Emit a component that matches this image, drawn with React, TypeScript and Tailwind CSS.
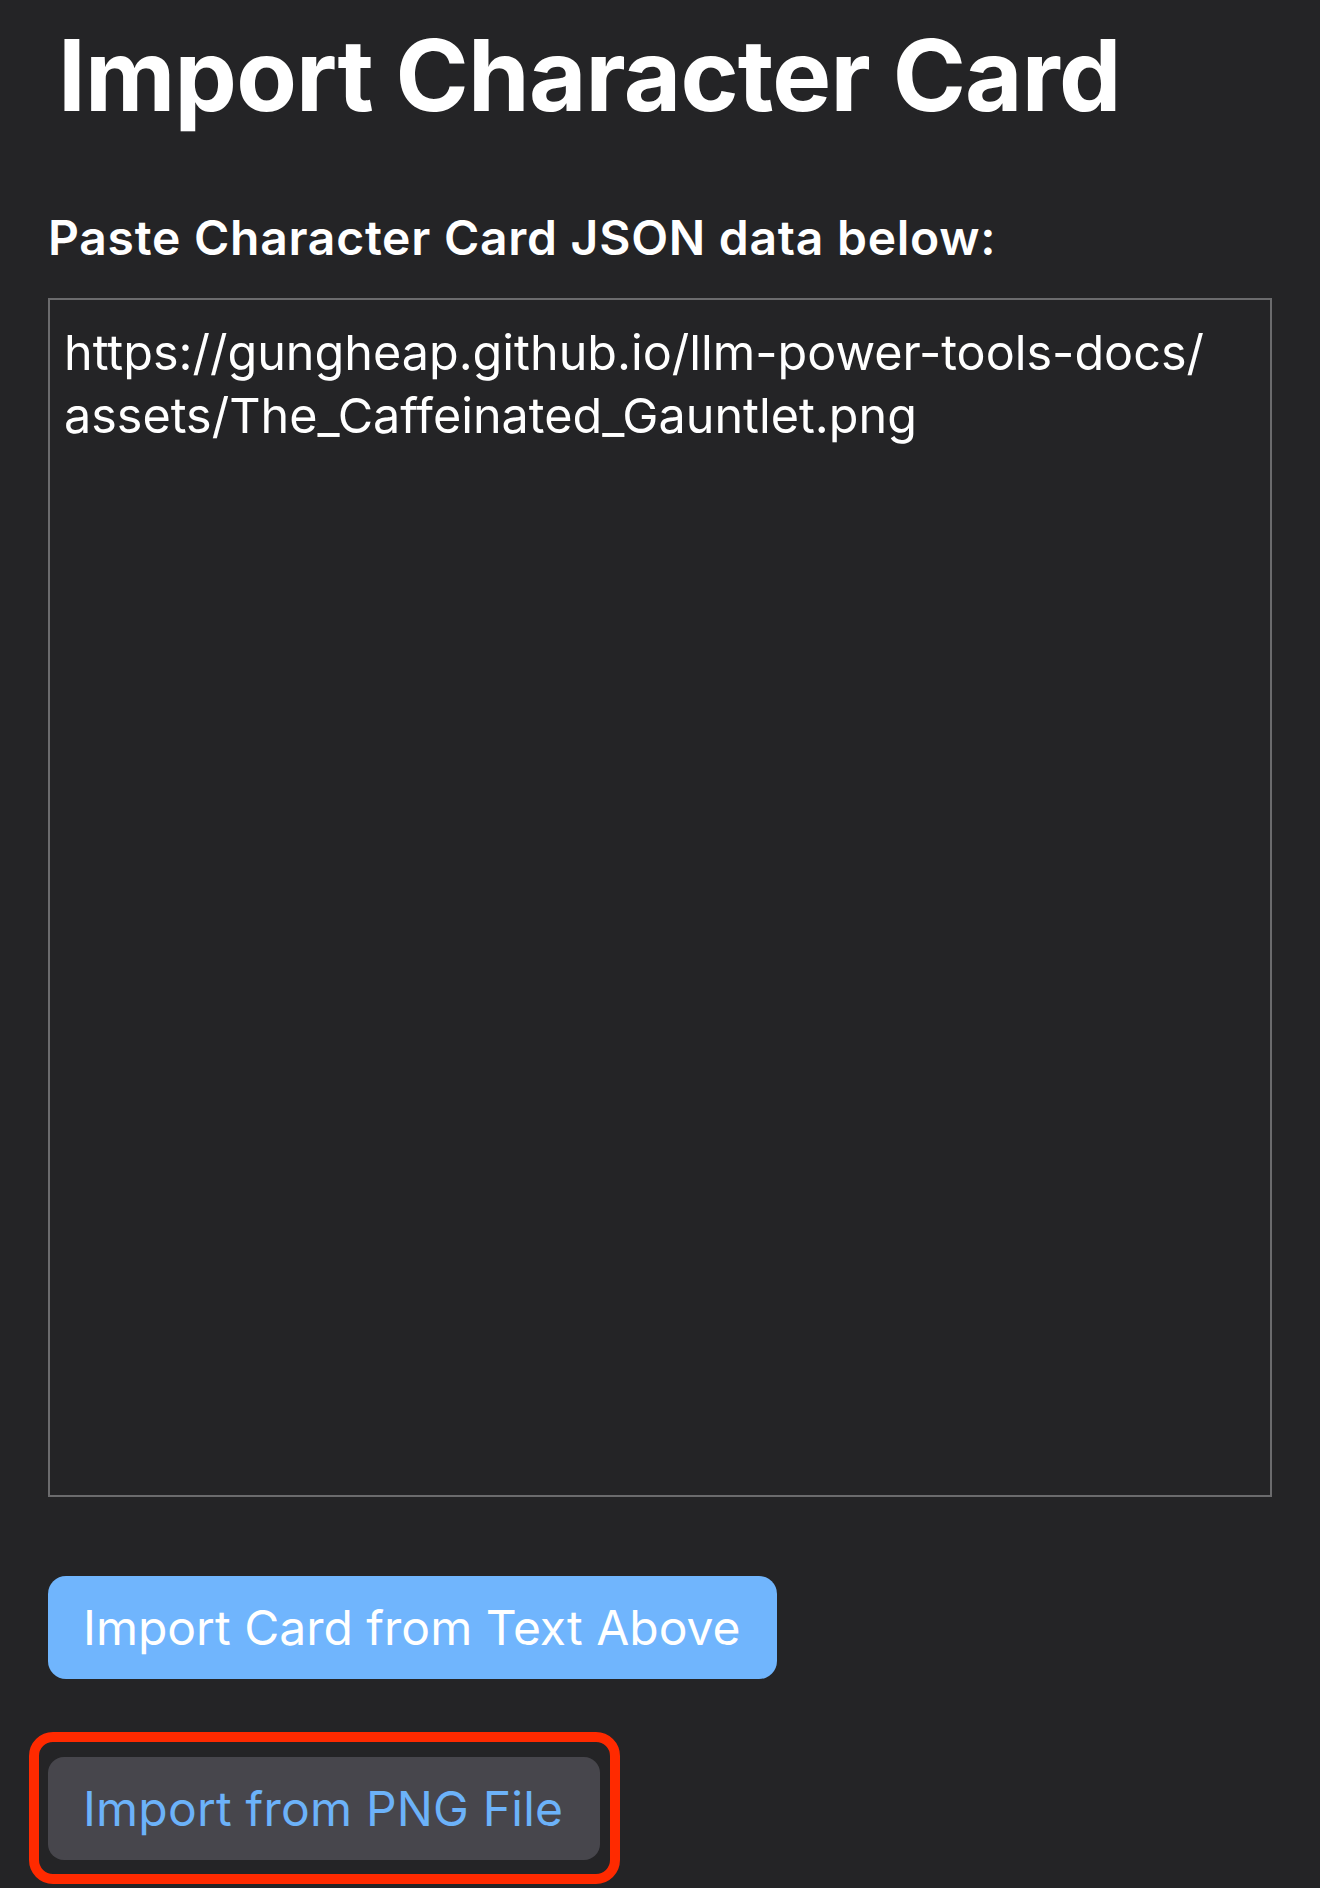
import React from "react";

export default function App() {
  const url = "https://gungheap.github.io/llm-power-tools-docs/\u200Bassets/The_Caffeinated_Gauntlet.png";
  return (
    <div
      className="min-h-[1888px] w-full bg-[#242426] px-[48px] pt-[16px] text-white"
      style={{ fontFamily: "Inter, 'Noto Sans', sans-serif" }}
    >
      <h1 className="ml-[10px] text-[99px] font-bold leading-[118px] tracking-[-0.8px]">
        Import Character Card
      </h1>
      <label className="mt-[76px] block text-[48px] font-semibold leading-[56px] tracking-[0.75px]">
        Paste Character Card JSON data below:
      </label>
      <textarea
        className="mt-[32px] block h-[1199px] w-full resize-none border-2 border-[#6b6b6d] bg-[#242426] px-[14px] pt-[21px] text-[48.5px] leading-[63px] text-white outline-none"
        defaultValue={url}
        style={{ fontFamily: "Inter, 'Noto Sans', sans-serif" }}
      />
      <div className="mt-[79px]">
        <button className="h-[103px] rounded-[18px] bg-[#70b5fd] pl-[35px] pr-[36px] text-[48px] font-normal leading-[56px] text-white">
          Import Card from Text Above
        </button>
      </div>
      <div className="mt-[78px]">
        <div className="relative inline-block">
          <button className="h-[103px] rounded-[16px] bg-[#47464c] pl-[35px] pr-[37px] text-[48px] font-normal leading-[56px] tracking-[0.2px] text-[#6cb2f9]">
            Import from PNG File
          </button>
          <span className="pointer-events-none absolute -bottom-[24px] -left-[19px] -right-[20px] -top-[25px] rounded-[24px] border-[10px] border-[#ff2a00]" />
        </div>
      </div>
    </div>
  );
}
